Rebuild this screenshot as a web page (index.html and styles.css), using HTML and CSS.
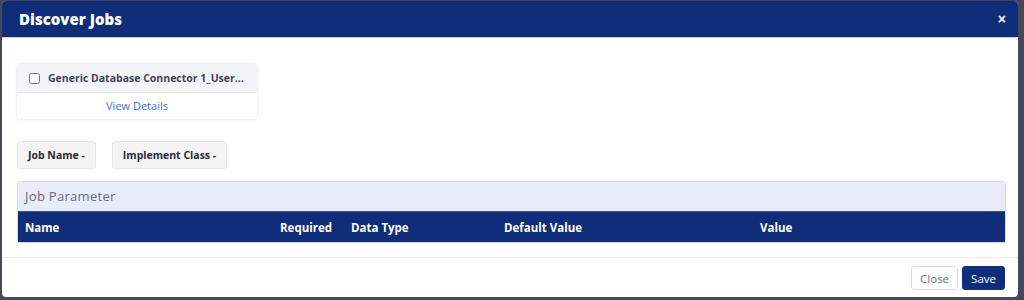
FILE: index.html
```html
<!DOCTYPE html>
<html lang="en">
<head>
    <meta charset="UTF-8">
    <meta name="viewport" content="width=device-width, initial-scale=1.0">
    <title>Discover Jobs</title>
    <link rel="stylesheet" href="styles.css">
</head>
<body>
    <div class="modal">
        <div class="modal-header">
            <h2>Discover Jobs</h2>
            <button class="close-x" type="button">&times;</button>
        </div>
        <div class="modal-body">
            <div class="job-card">
                <label class="job-card-title">
                    <input type="checkbox">
                    <span>Generic Database Connector 1_User...</span>
                </label>
                <a class="job-card-link" href="#">View Details</a>
            </div>

            <div class="tags">
                <span class="tag">Job Name -</span>
                <span class="tag">Implement Class -</span>
            </div>

            <div class="panel">
                <div class="panel-title">Job Parameter</div>
                <div class="param-head">
                    <span class="col-name">Name</span>
                    <span class="col-req">Required</span>
                    <span class="col-type">Data Type</span>
                    <span class="col-def">Default Value</span>
                    <span class="col-val">Value</span>
                </div>
            </div>
        </div>
        <div class="modal-footer">
            <button class="btn btn-light" type="button">Close</button>
            <button class="btn btn-primary" type="button">Save</button>
        </div>
    </div>
</body>
</html>
```

FILE: styles.css
```css
* {
    box-sizing: border-box;
}
body {
    margin: 0;
    height: 300px;
    background: #45475a;
    font-family: "Open Sans", sans-serif;
    padding: 1px 6px 3px 2px;
}
.modal {
    background: white;
    border-radius: 4px;
    height: 296px;
    overflow: hidden;
    display: flex;
    flex-direction: column;
}
.modal-header {
    background: #0f2d78;
    height: 37px;
    display: flex;
    align-items: center;
    justify-content: space-between;
    padding: 0 12px 0 17px;
    border-bottom: 1px solid #c9cfe0;
}
.modal-header h2 {
    margin: 0;
    color: white;
    font-size: 15px;
    font-weight: 800;
}
.close-x {
    background: none;
    border: none;
    color: white;
    font-size: 14px;
    font-weight: 700;
    padding: 0;
    cursor: pointer;
}
.modal-body {
    flex: 1;
    padding: 26px 12px 0 15px;
}
.job-card {
    width: 240px;
    border-radius: 4px;
    box-shadow: 0 0 3px rgba(0,0,0,0.15);
    background: white;
}
.job-card-title {
    display: flex;
    align-items: center;
    gap: 8px;
    height: 29px;
    padding: 0 12px;
    background: #f4f5f8;
    border-bottom: 1px solid #e9eaee;
    border-radius: 4px 4px 0 0;
    font-size: 10.5px;
    font-weight: 700;
    color: #3f4560;
}
.job-card-title input {
    margin: 0;
    width: 11px;
    height: 11px;
}
.job-card-link {
    display: block;
    text-align: center;
    height: 26px;
    line-height: 26px;
    font-size: 11px;
    color: #3a6fd6;
    text-decoration: none;
}
.tags {
    display: flex;
    gap: 16px;
    margin-top: 22px;
}
.tag {
    background: #f4f4f5;
    border: 1px solid #e6e6e8;
    border-radius: 3px;
    height: 28px;
    line-height: 26px;
    padding: 0 10px;
    font-size: 10.5px;
    font-weight: 700;
    color: #2b2b33;
}
.panel {
    margin-top: 12px;
    border: 1px solid #d3d8ee;
    border-radius: 3px 3px 0 0;
    overflow: hidden;
}
.panel-title {
    background: #e8ebfa;
    height: 29px;
    line-height: 29px;
    padding: 0 7px;
    font-size: 13px;
    letter-spacing: 0.3px;
    color: #6b6d78;
}
.param-head {
    background: #0f2d78;
    height: 31px;
    display: flex;
    align-items: center;
    padding-left: 7px;
    color: white;
    font-size: 11.5px;
    font-weight: 700;
    border-top: 1px solid #3f5596;
}
.col-name { width: 255px; }
.col-req { width: 71px; }
.col-type { width: 153px; }
.col-def { width: 256px; }
.col-val { flex: 1; }
.modal-footer {
    border-top: 1px solid #e9e9ec;
    height: 40px;
    display: flex;
    align-items: center;
    justify-content: flex-end;
    gap: 4px;
    padding: 1px 13px 0 0;
}
.btn {
    height: 24px;
    padding: 0 8px;
    border-radius: 3px;
    font-family: "Open Sans", sans-serif;
    font-size: 11.5px;
    cursor: pointer;
}
.btn-light {
    background: white;
    border: 1px solid #d9dde8;
    color: #6f717a;
}
.btn-primary {
    background: #0f2d78;
    border: 1px solid #0f2d78;
    color: white;
}
```
